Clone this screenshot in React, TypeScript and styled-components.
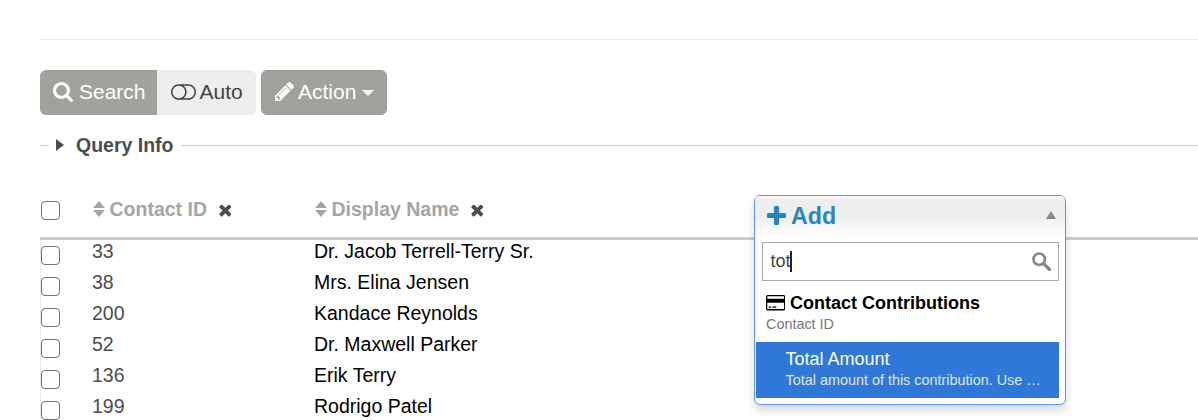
import React from 'react';
import styled, { createGlobalStyle } from 'styled-components';

const GlobalStyle = createGlobalStyle`
  * { box-sizing: border-box; }
  body {
    margin: 0;
    background: #fff;
    color: #4d4d4d;
    font-family: "Liberation Sans", Arial, sans-serif;
    font-size: 19.5px;
    overflow: hidden;
  }
`;

const Page = styled.main`
  position: relative;
  height: 420px;
  overflow: hidden;
  padding: 39px 0 0 40px;
`;

const Divider = styled.div`
  height: 1px;
  background: #eee;
`;

const Toolbar = styled.div`
  display: flex;
  gap: 5px;
  margin-top: 30px;
`;

const ButtonGroup = styled.div`
  display: flex;
  border-radius: 6px;
  overflow: hidden;
`;

const Button = styled.button<{ $light?: boolean; $width: number }>`
  display: flex;
  align-items: center;
  width: ${(p) => p.$width}px;
  height: 45px;
  padding: 0 0 1px 12.5px;
  border: 1px solid #9a9b94;
  background: ${(p) => (p.$light ? '#eee' : '#a1a29b')};
  color: ${(p) => (p.$light ? '#444' : '#fff')};
  font: 21px "Liberation Sans", Arial, sans-serif;
  white-space: nowrap;
`;

const GroupedButton = styled(Button)`
  border: 0;
  padding-left: ${(p) => (p.$light ? 13.5 : 13)}px;
`;

const ActionButton = styled(Button)`
  border-radius: 6px;
`;

const Icon = styled.svg<{ $gap?: number; $lift?: number }>`
  display: block;
  flex: none;
  fill: currentColor;
  margin-right: ${(p) => p.$gap ?? 0}px;
  margin-bottom: ${(p) => p.$lift ?? 0}px;
`;

const Caret = styled.span`
  width: 0;
  margin: 2px 0 0 6px;
  border: 6px solid transparent;
  border-top-color: #fff;
  border-bottom: 0;
`;

const Legend = styled.div`
  display: flex;
  align-items: center;
  height: 24px;
  margin-top: 19px;
  font-weight: bold;
  color: #4d4d4d;
`;

const Rule = styled.span<{ $width?: number }>`
  height: 1px;
  margin-top: -1px;
  background: #cfcfcf;
  ${(p) => (p.$width ? `width: ${p.$width}px;` : 'flex: 1;')}
`;

const Disclosure = styled.span`
  width: 0;
  margin: 0 12px 2px 7px;
  border: 6.5px solid transparent;
  border-left: 8px solid #4d4d4d;
  border-right: 0;
`;

const LegendText = styled.span`
  margin-right: 7px;
  padding-bottom: 2px;
`;

const TableHead = styled.div`
  display: grid;
  grid-template-columns: 52px 222px 1fr;
  height: 62px;
  margin-top: 20px;
  padding-top: 18px;
  border-bottom: 3px solid #cdcdc2;
`;

const HeadCell = styled.div`
  display: flex;
  align-items: center;
  height: 27px;
  padding-left: 0.5px;
  color: #a5a5a5;
  font-weight: bold;
  white-space: nowrap;
`;

const Rows = styled.div`
  border-left: 1px solid #eaeaea;
`;

const Row = styled.div`
  display: grid;
  grid-template-columns: 51px 222px 1fr;
  height: 31px;
  line-height: 23px;
`;

const Name = styled.span`
  color: #000;
`;

const CheckBox = styled.input<{ $head?: boolean }>`
  appearance: none;
  display: block;
  width: 19px;
  height: 19px;
  margin: ${(p) => (p.$head ? '5px 0 0 1px' : '6px 0 0 0')};
  border: 1px solid #707070;
  border-radius: 4px;
  background: #fff;
`;

const DropDown = styled.div`
  position: absolute;
  left: 754px;
  top: 195px;
  width: 312px;
  height: 210px;
  border: 1px solid #5897fb;
  border-radius: 6px;
  background: #fff;
  box-shadow: 0 6px 8px rgba(0, 0, 0, 0.15);
`;

const AddBar = styled.div`
  display: flex;
  align-items: center;
  height: 41px;
  padding: 0 9px 0 12px;
  border-radius: 5px 5px 0 0;
  background: linear-gradient(#fff 0, #eee 8%, #eee 50%, #fff 100%);
  color: #2786c2;
  font-size: 23.2px;
  font-weight: bold;
`;

const UpArrow = styled.span`
  width: 0;
  margin: 0 0 3px auto;
  border: 5px solid transparent;
  border-bottom: 8px solid #888;
  border-top: 0;
`;

const SearchBox = styled.div`
  display: flex;
  align-items: center;
  height: 39px;
  margin: 5px 6px 0 7px;
  padding: 0 7px 0 7.5px;
  border: 1px solid #aaa;
  font-size: 18px;
  color: #444;
`;

const TextCursor = styled.span`
  width: 1.5px;
  height: 21px;
  margin: 0 auto 1px -0.5px;
  background: #222;
`;

const Group = styled.div`
  height: 61px;
  padding: 11px 0 0 11px;
`;

const GroupTitle = styled.div`
  display: flex;
  align-items: center;
  height: 22px;
  color: #000;
  font-size: 18px;
  font-weight: bold;
`;

const Description = styled.div`
  line-height: 20px;
  font-size: 14.4px;
  color: #777;
  white-space: nowrap;
`;

const Option = styled.div`
  height: 56px;
  margin: 0 6px 0 1px;
  padding: 6px 0 0 29.5px;
  background: #3078d8;
  color: #fff;
  font-size: 18px;
  line-height: 22px;

  ${Description} {
    color: #dfe8f6;
  }
`;

const PATHS = {
  search:
    'M1216 832q0-185-131.5-316.5t-316.5-131.5-316.5 131.5-131.5 316.5 131.5 316.5 316.5 131.5 316.5-131.5 131.5-316.5zm512 832q0 52-38 90t-90 38q-54 0-90-38l-343-342q-179 124-399 124-143 0-273.5-55.5t-225-150-150-225-55.5-273.5 55.5-273.5 150-225 225-150 273.5-55.5 273.5 55.5 225 150 150 225 55.5 273.5q0 220-124 399l343 343q37 37 37 90z',
  toggle:
    'M1152 896q0-104-40.5-198.5T1002 534 838.5 424.5 640 384t-198.5 40.5T278 534 168.5 697.5 128 896t40.5 198.5T278 1258t163.5 109.5T640 1408t198.5-40.5T1002 1258t109.5-163.5T1152 896zm768 0q0-104-40.5-198.5T1770 534t-163.5-109.5T1408 384h-386q119 90 188.5 224t69.5 288-69.5 288-188.5 224h386q104 0 198.5-40.5T1770 1258t109.5-163.5T1920 896zm128 0q0 130-51 248.5t-136.5 204-204 136.5-248.5 51H640q-130 0-248.5-51t-204-136.5-136.5-204T0 896t51-248.5 136.5-204 204-136.5T640 256h768q130 0 248.5 51t204 136.5 136.5 204T2048 896z',
  pencil:
    'M491 1536l91-91-235-235-91 91v107h128v128h107zm523-928q0-22-22-22-10 0-17 7l-542 542q-7 7-7 17 0 22 22 22 10 0 17-7l542-542q7-7 7-17zm-54-192l416 416-832 832h-416v-416zm683 96q0 53-37 90l-166 166-416-416 166-165q36-38 90-38 53 0 91 38l235 234q37 39 37 91z',
  plus:
    'M1600 736v192q0 40-28 68t-68 28h-416v416q0 40-28 68t-68 28h-192q-40 0-68-28t-28-68v-416h-416q-40 0-68-28t-28-68v-192q0-40 28-68t68-28h416v-416q0-40 28-68t68-28h192q40 0 68 28t28 68v416h416q40 0 68 28t28 68z',
  times:
    'M1490 1322q0 40-28 68l-136 136q-28 28-68 28t-68-28l-294-294-294 294q-28 28-68 28t-68-28l-136-136q-28-28-28-68t28-68l294-294-294-294q-28-28-28-68t28-68l136-136q28-28 68-28t68 28l294 294 294-294q28-28 68-28t68 28l136 136q28 28 28 68t-28 68l-294 294 294 294q28 28 28 68z',
  card:
    'M1760 128q66 0 113 47t47 113v1216q0 66-47 113t-113 47H160q-66 0-113-47T0 1504V288q0-66 47-113t113-47h1600zM160 256q-13 0-22.5 9.5T128 288v224h1664V288q0-13-9.5-22.5T1760 256H160zm1600 1280q13 0 22.5-9.5t9.5-22.5V896H128v608q0 13 9.5 22.5t22.5 9.5h1600zM256 1408v-128h256v128H256zm384 0v-128h384v128H640z',
};

const RemoveIcon = styled(Icon)`
  margin-left: 12px;
  margin-top: 2px;
  color: #4d4d4d;
`;

const SortIcon = () => (
  <Icon width="12" height="16" viewBox="0 0 12 16" $gap={5} $lift={1}>
    <path d="M6 0 12 7H0zM0 9h12L6 16z" />
  </Icon>
);

const SortableHead = ({ label }: { label: string }) => (
  <HeadCell>
    <SortIcon />
    {label}
    <RemoveIcon width="12.5" height="12.5" viewBox="302 302 1188 1252">
      <path d={PATHS.times} />
    </RemoveIcon>
  </HeadCell>
);

const contacts = [
  { id: 33, name: 'Dr. Jacob Terrell-Terry Sr.' },
  { id: 38, name: 'Mrs. Elina Jensen' },
  { id: 200, name: 'Kandace Reynolds' },
  { id: 52, name: 'Dr. Maxwell Parker' },
  { id: 136, name: 'Erik Terry' },
  { id: 199, name: 'Rodrigo Patel' },
];

export default function App() {
  return (
    <>
      <GlobalStyle />
      <Page>
        <Divider />
        <Toolbar>
          <ButtonGroup>
            <GroupedButton $width={117}>
              <Icon width="20" height="20" viewBox="64 128 1664 1664" $gap={6}>
                <path d={PATHS.search} />
              </Icon>
              Search
            </GroupedButton>
            <GroupedButton $light $width={99}>
              <Icon width="25" height="16" viewBox="0 256 2048 1280" $gap={4} $lift={1}>
                <path d={PATHS.toggle} />
              </Icon>
              Auto
            </GroupedButton>
          </ButtonGroup>
          <ActionButton $width={126}>
            <Icon width="19" height="19" viewBox="128 149 1515 1515" $gap={4.5} $lift={1}>
              <path d={PATHS.pencil} />
            </Icon>
            Action
            <Caret />
          </ActionButton>
        </Toolbar>
        <Legend>
          <Rule $width={9} />
          <Disclosure />
          <LegendText>Query Info</LegendText>
          <Rule />
        </Legend>
        <TableHead>
          <CheckBox type="checkbox" $head />
          <SortableHead label="Contact ID" />
          <SortableHead label="Display Name" />
        </TableHead>
        <Rows>
          {contacts.map((c) => (
            <Row key={c.id}>
              <CheckBox type="checkbox" />
              <span>{c.id}</span>
              <Name>{c.name}</Name>
            </Row>
          ))}
        </Rows>
        <DropDown>
          <AddBar>
            <Icon width="19" height="19" viewBox="192 128 1408 1408" $gap={5} $lift={2}>
              <path d={PATHS.plus} />
            </Icon>
            Add
            <UpArrow />
          </AddBar>
          <SearchBox>
            tot
            <TextCursor />
            <Icon width="19" height="19" viewBox="0 0 19 19">
              <circle cx="7.2" cy="7.2" r="5.7" fill="none" stroke="#888" strokeWidth="2.7" />
              <path d="m11.5 11.5 6 6" stroke="#888" strokeWidth="3.3" strokeLinecap="round" />
            </Icon>
          </SearchBox>
          <Group>
            <GroupTitle>
              <Icon width="19.3" height="15.4" viewBox="0 128 1920 1536" $gap={4.7}>
                <path d={PATHS.card} />
              </Icon>
              Contact Contributions
            </GroupTitle>
            <Description>Contact ID</Description>
          </Group>
          <Option>
            Total Amount
            <Description>Total amount of this contribution. Use …</Description>
          </Option>
        </DropDown>
      </Page>
    </>
  );
}
